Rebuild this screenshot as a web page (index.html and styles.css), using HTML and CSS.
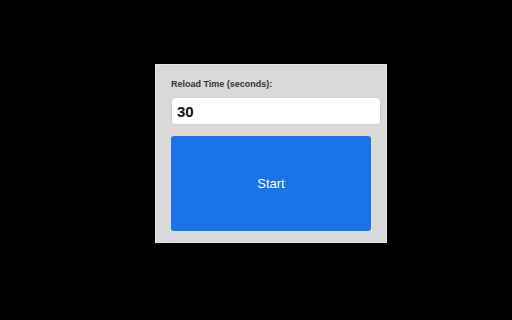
FILE: index.html
```html
<!DOCTYPE html>
<html>
<head>
<meta charset="utf-8">
<link rel="stylesheet" href="styles.css">
</head>
<body>
<div class="stage">
  <div class="panel">
    <label class="label" for="t">Reload Time (seconds):</label>
    <input class="field" id="t" type="text" value="30">
    <button class="start">Start</button>
  </div>
</div>
</body>
</html>
```
FILE: styles.css
```css
html, body {
  margin: 0;
  height: 100%;
  background: #000;
}
.stage {
  padding: 64px 0 0 155px;
}
.panel {
  width: 200px;
  padding: 15px 15px 11px;
  background: #d9d9d9;
  border: 1px solid #e6e6e6;
  font-family: "Liberation Sans", Arial, sans-serif;
  display: flex;
  flex-direction: column;
  align-items: flex-start;
}
.label {
  font-size: 9px;
  font-weight: bold;
  color: #333;
  line-height: 11px;
  margin-top: -1px;
}
.field {
  box-sizing: border-box;
  width: 210px;
  height: 28px;
  margin-top: 7px;
  padding: 0 5px;
  border: 1px solid #cfcfcf;
  border-radius: 4px;
  background: #fff;
  font-family: "Liberation Sans", Arial, sans-serif;
  font-size: 15px;
  font-weight: bold;
  color: #111;
  outline: none;
}
.start {
  width: 200px;
  height: 95px;
  margin-top: 11px;
  border: none;
  border-radius: 3px;
  background: #1a73e8;
  color: #fff;
  font-family: "Liberation Sans", Arial, sans-serif;
  font-size: 13px;
  padding: 0;
}
```
